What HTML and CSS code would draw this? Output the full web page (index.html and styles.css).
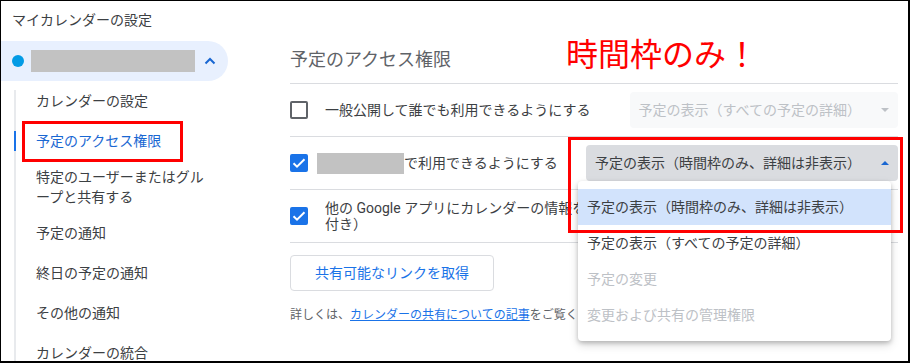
FILE: index.html
```html
<!DOCTYPE html>
<html lang="ja">
<head>
<meta charset="utf-8">
<title>マイカレンダーの設定</title>
<link rel="stylesheet" href="styles.css">
</head>
<body>
<div class="frame">
  <aside class="sidebar">
    <div class="side-title">マイカレンダーの設定</div>
    <div class="cal-pill">
      <span class="cal-dot"></span>
      <span class="redact redact-name"></span>
      <svg class="chev" viewBox="0 0 12 8" width="12" height="8"><path d="M1.5 6.5 L6 2 L10.5 6.5" fill="none" stroke="#1967d2" stroke-width="2"/></svg>
    </div>
    <ul class="nav">
      <li class="nav-item"><span>カレンダーの設定</span></li>
      <li class="nav-item active"><span>予定のアクセス権限</span><span class="mark mark-nav"></span></li>
      <li class="nav-item"><span>特定のユーザーまたはグル<br>ープと共有する</span></li>
      <li class="nav-item"><span>予定の通知</span></li>
      <li class="nav-item"><span>終日の予定の通知</span></li>
      <li class="nav-item"><span>その他の通知</span></li>
      <li class="nav-item"><span>カレンダーの統合</span></li>
    </ul>
  </aside>
  <main class="main">
    <div class="annot">時間枠のみ！</div>
    <h2 class="sec-title">予定のアクセス権限</h2>
    <div class="perm-row">
      <span class="cb"></span>
      <span class="perm-label">一般公開して誰でも利用できるようにする</span>
      <div class="select disabled">
        <span>予定の表示（すべての予定の詳細）</span>
        <span class="arrow down"></span>
      </div>
    </div>
    <div class="perm-row">
      <span class="cb checked"><svg viewBox="0 0 18 18" width="18" height="18"><path d="M3.5 9.2 L7 12.6 L14.5 5.2" fill="none" stroke="#fff" stroke-width="2"/></svg></span>
      <span class="perm-label"><span class="redact redact-user"></span>で利用できるようにする</span>
      <div class="select open">
        <span>予定の表示（時間枠のみ、詳細は非表示）</span>
        <span class="arrow up"></span>
        <ul class="menu">
          <li class="menu-item selected">予定の表示（時間枠のみ、詳細は非表示）</li>
          <li class="menu-item">予定の表示（すべての予定の詳細）</li>
          <li class="menu-item disabled">予定の変更</li>
          <li class="menu-item disabled">変更および共有の管理権限</li>
        </ul>
        <span class="mark mark-select"></span>
      </div>
    </div>
    <div class="perm-row">
      <span class="cb checked"><svg viewBox="0 0 18 18" width="18" height="18"><path d="M3.5 9.2 L7 12.6 L14.5 5.2" fill="none" stroke="#fff" stroke-width="2"/></svg></span>
      <span class="perm-label two">他の Google アプリにカレンダーの情報を表示する（アクセス権限による制限<br>付き）</span>
    </div>
    <button class="link-btn">共有可能なリンクを取得</button>
    <p class="info">詳しくは、<a href="#" class="info-link">カレンダーの共有についての記事</a>をご覧ください。</p>
  </main>
</div>
</body>
</html>
```

FILE: styles.css
```css
* {
  box-sizing: border-box;
  margin: 0;
  padding: 0;
}

body {
  margin: 0;
  background: #fff;
  color: #3c4043;
  font-family: Roboto, "Noto Sans CJK JP", sans-serif;
}

.frame {
  width: 910px;
  height: 363px;
  border-style: solid;
  border-color: #000;
  border-width: 1px 2px 2px 1px;
  display: flex;
  overflow: hidden;
  position: relative;
}

/* Sidebar */
.sidebar {
  width: 259px;
  flex: none;
}

.side-title {
  font-size: 14px;
  line-height: 20px;
  height: 40px;
  padding: 9px 0 0 11px;
  color: #3c4043;
}

.cal-pill {
  width: 227px;
  height: 40px;
  background: #e8f0fe;
  border-radius: 0 20px 20px 0;
  display: flex;
  align-items: center;
  padding-left: 11px;
}

.cal-dot {
  width: 12px;
  height: 12px;
  border-radius: 50%;
  background: #039be5;
  margin-right: 7px;
  flex: none;
}

.redact {
  display: inline-block;
  background: #c2c2c2;
}

.redact-name {
  width: 164px;
  height: 22px;
}

.chev {
  margin-left: 9px;
  flex: none;
}

.nav {
  list-style: none;
  margin-left: 13px;
  width: 240px;
  background: linear-gradient(#e8eaed, #e8eaed) 0 9px / 2px 100% no-repeat;
}

.nav-item {
  position: relative;
  font-size: 14px;
  line-height: 20px;
  min-height: 40px;
  padding: 6px 0 6px 22px;
  display: flex;
  align-items: center;
  color: #3c4043;
}

.nav-item.active {
  color: #1967d2;
}

.nav-item.active::before {
  content: "";
  position: absolute;
  left: 0;
  top: 10px;
  width: 2px;
  height: 20px;
  background: #1a73e8;
}

.mark {
  position: absolute;
  border: 3px solid #f00;
  z-index: 3;
}

.mark-nav {
  left: 8px;
  top: 0;
  width: 161px;
  height: 41px;
}

/* Main */
.main {
  flex: 1;
  position: relative;
  padding: 47px 10px 0 30px;
}

.annot {
  position: absolute;
  left: 306px;
  top: 35px;
  font-family: "Noto Sans CJK JP", sans-serif;
  font-size: 32px;
  line-height: 32px;
  color: #f00;
  white-space: nowrap;
}

.sec-title {
  font-size: 18px;
  font-weight: 400;
  line-height: 24px;
  color: #5f6368;
  padding-bottom: 11px;
  border-bottom: 1px solid #dadce0;
}

.perm-row {
  display: flex;
  align-items: center;
  height: 53px;
  border-bottom: 1px solid #dadce0;
}

.cb {
  width: 18px;
  height: 18px;
  border: 2px solid #5f6368;
  border-radius: 2px;
  flex: none;
  margin-right: 17px;
  display: flex;
  align-items: center;
  justify-content: center;
}

.cb.checked {
  background: #1a73e8;
  border-color: #1a73e8;
}

.cb.checked svg {
  flex: none;
  margin: -2px;
}

.perm-label {
  font-size: 14px;
  line-height: 20px;
  color: #3c4043;
  white-space: nowrap;
  display: flex;
  align-items: center;
}

/* part of this label sits under the open menu: clip it at the menu edge */
.perm-label.two {
  display: block;
  width: 253px;
  overflow: hidden;
  line-height: 16px;
}

.redact-user {
  width: 87px;
  height: 21px;
  margin-left: -8px;
}

.select {
  margin-left: auto;
  height: 36px;
  border-radius: 4px;
  display: flex;
  align-items: center;
  gap: 20px;
  padding: 0 9px;
  font-size: 14px;
  line-height: 20px;
  position: relative;
  white-space: nowrap;
}

.select.disabled {
  background: #f8f9fa;
  color: #bdc1c6;
}

.select.open {
  background: #dadce0;
  color: #3c4043;
}

.arrow {
  width: 0;
  height: 0;
  border-left: 4px solid transparent;
  border-right: 4px solid transparent;
  flex: none;
}

.arrow.down {
  border-top: 4px solid #bdc1c6;
}

.arrow.up {
  border-bottom: 4px solid #1967d2;
}

.menu {
  position: absolute;
  left: -8px;
  top: 36px;
  width: 313px;
  padding: 8px 0;
  list-style: none;
  background: #fff;
  border-radius: 4px;
  box-shadow: 0 2px 4px rgba(0, 0, 0, 0.2), 0 4px 10px rgba(0, 0, 0, 0.15);
  z-index: 2;
}

.menu-item {
  height: 36px;
  line-height: 36px;
  padding-left: 9px;
  font-size: 14px;
  color: #3c4043;
}

.menu-item.selected {
  background: #d2e3fc;
}

.menu-item.disabled {
  color: #bdc1c6;
}

.mark-select {
  left: -18px;
  top: -8px;
  width: 335px;
  height: 96px;
}

.link-btn {
  display: block;
  margin-top: 12px;
  height: 36px;
  padding: 0 24px;
  border: 1px solid #dadce0;
  border-radius: 4px;
  background: #fff;
  color: #1a73e8;
  font-family: Roboto, "Noto Sans CJK JP", sans-serif;
  font-size: 14px;
  line-height: 20px;
}

/* the end of this line sits under the open menu: clip it at the menu edge */
.info {
  margin-top: 16px;
  width: 288px;
  overflow: hidden;
  font-size: 12px;
  line-height: 16px;
  color: #5f6368;
  white-space: nowrap;
}

.info-link {
  color: #1a73e8;
  text-decoration: underline;
}
```
